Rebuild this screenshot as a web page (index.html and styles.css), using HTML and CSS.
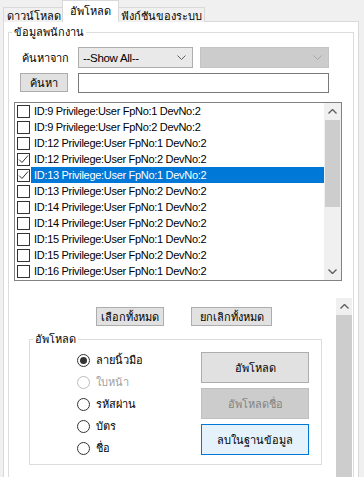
FILE: index.html
```html
<!DOCTYPE html>
<html lang="th">
<head>
  <meta charset="UTF-8">
  <title>อัพโหลด</title>
  <link rel="stylesheet" href="styles.css">
</head>
<body>

  <div class="window">
    <div class="tabs">
      <div class="tab">ดาวน์โหลด</div>
      <div class="tab active">อัพโหลด</div>
      <div class="tab">ฟังก์ชันของระบบ</div>
    </div>

    <div class="page">
      <fieldset class="group emp">
        <legend>ข้อมูลพนักงาน</legend>

        <div class="row find-row">
          <span class="lbl">ค้นหาจาก</span>
          <div class="combo">
            <span>--Show All--</span>
            <svg width="9" height="5" viewBox="0 0 9 5"><path d="M0.5 0.5 L4.5 4.5 L8.5 0.5" fill="none" stroke="#606060"/></svg>
          </div>
          <div class="combo disabled">
            <span></span>
            <svg width="9" height="5" viewBox="0 0 9 5"><path d="M0.5 0.5 L4.5 4.5 L8.5 0.5" fill="none" stroke="#a8a8a8"/></svg>
          </div>
        </div>

        <div class="row search-row">
          <button class="btn small">ค้นหา</button>
          <input class="textbox" type="text">
        </div>

        <div class="list">
          <div class="items">
            <div class="item"><span class="check"></span><span class="txt">ID:9 Privilege:User FpNo:1 DevNo:2</span></div>
            <div class="item"><span class="check"></span><span class="txt">ID:9 Privilege:User FpNo:2 DevNo:2</span></div>
            <div class="item"><span class="check"></span><span class="txt">ID:12 Privilege:User FpNo:1 DevNo:2</span></div>
            <div class="item"><span class="check"><svg width="11" height="11" viewBox="0 0 11 11"><path d="M1 5.5 L4 8.5 L10 1.5" fill="none" stroke="#333"/></svg></span><span class="txt">ID:12 Privilege:User FpNo:2 DevNo:2</span></div>
            <div class="item selected"><span class="check"><svg width="11" height="11" viewBox="0 0 11 11"><path d="M1 5.5 L4 8.5 L10 1.5" fill="none" stroke="#333"/></svg></span><span class="txt">ID:13 Privilege:User FpNo:1 DevNo:2</span></div>
            <div class="item"><span class="check"></span><span class="txt">ID:13 Privilege:User FpNo:2 DevNo:2</span></div>
            <div class="item"><span class="check"></span><span class="txt">ID:14 Privilege:User FpNo:1 DevNo:2</span></div>
            <div class="item"><span class="check"></span><span class="txt">ID:14 Privilege:User FpNo:2 DevNo:2</span></div>
            <div class="item"><span class="check"></span><span class="txt">ID:15 Privilege:User FpNo:1 DevNo:2</span></div>
            <div class="item"><span class="check"></span><span class="txt">ID:15 Privilege:User FpNo:2 DevNo:2</span></div>
            <div class="item"><span class="check"></span><span class="txt">ID:16 Privilege:User FpNo:1 DevNo:2</span></div>
          </div>
          <div class="vscroll list-scroll">
            <div class="arrow"><svg width="9" height="5" viewBox="0 0 9 5"><path d="M0.5 4.5 L4.5 0.5 L8.5 4.5" fill="none" stroke="#606060" stroke-width="1.4"/></svg></div>
            <div class="track"><div class="thumb"></div></div>
            <div class="arrow"><svg width="9" height="5" viewBox="0 0 9 5"><path d="M0.5 0.5 L4.5 4.5 L8.5 0.5" fill="none" stroke="#606060" stroke-width="1.4"/></svg></div>
          </div>
        </div>

        <div class="panel">
          <div class="panel-body">
            <div class="select-row">
              <button class="btn sel">เลือกทั้งหมด</button>
              <button class="btn unsel">ยกเลิกทั้งหมด</button>
            </div>

            <fieldset class="group upload">
              <legend>อัพโหลด</legend>
              <div class="upload-body">
                <div class="radios">
                  <label class="radio"><span class="dot on"></span>ลายนิ้วมือ</label>
                  <label class="radio off"><span class="dot"></span>ใบหน้า</label>
                  <label class="radio"><span class="dot"></span>รหัสผ่าน</label>
                  <label class="radio"><span class="dot"></span>บัตร</label>
                  <label class="radio"><span class="dot"></span>ชื่อ</label>
                </div>
                <div class="actions">
                  <button class="btn big">อัพโหลด</button>
                  <button class="btn big" disabled>อัพโหลดชื่อ</button>
                  <button class="btn big focus">ลบในฐานข้อมูล</button>
                </div>
              </div>
            </fieldset>
          </div>
          <div class="vscroll panel-scroll">
            <div class="arrow"><svg width="9" height="5" viewBox="0 0 9 5"><path d="M0.5 4.5 L4.5 0.5 L8.5 4.5" fill="none" stroke="#606060" stroke-width="1.4"/></svg></div>
            <div class="track"><div class="thumb"></div></div>
          </div>
        </div>
      </fieldset>
    </div>
  </div>

</body>
</html>
```

FILE: styles.css
```css
* {
  box-sizing: border-box;
}

body {
  margin: 0;
  background: #fff;
  font-family: Tahoma, "Noto Sans", "DejaVu Sans", sans-serif;
  font-size: 11px;
  color: #000;
}

.window {
  width: 364px;
  height: 477px;
  overflow: hidden;
  background: #f0f0f0;
}

/* tab strip */
.tabs {
  display: flex;
  align-items: flex-end;
  height: 22px;
  padding-left: 3px;
  position: relative;
  z-index: 1;
}

.tab {
  height: 15px;
  border: 1px solid #d9d9d9;
  border-bottom: none;
  line-height: 15px;
  background: #f0f0f0;
  white-space: nowrap;
  text-align: center;
}

.tab:first-child {
  width: 60px;
  padding-left: 2px;
}

.tab:last-child {
  width: 87px;
}

.tab.active {
  width: 57px;
  height: 22px;
  line-height: 14px;
  padding-top: 3px;
  background: #fff;
  margin: 0 -1px;
  position: relative;
}

.page {
  width: 356px;
  height: 470px;
  margin: -1px 0 0 3px;
  border: 1px solid #d9d9d9;
  background: #fff;
}

/* group boxes */
.group {
  margin: 0;
  padding: 0;
  border: 1px solid #dcdcdc;
  min-width: 0;
}

.group legend {
  margin-left: 3px;
  padding: 0 2px;
  line-height: 16px;
  height: 16px;
}

.emp {
  margin: 2px 4px 0 4px;
  height: 480px;
}

.row {
  display: flex;
  align-items: center;
}

.find-row {
  margin-top: 7px;
  height: 21px;
}

.lbl {
  width: 69px;
  padding-left: 13px;
  white-space: nowrap;
}

.combo {
  display: flex;
  align-items: center;
  justify-content: space-between;
  width: 115px;
  height: 21px;
  padding: 0 6px 0 4px;
  border: 1px solid #adadad;
  background: #e9e9e9;
  font-family: "Liberation Sans", Arial, sans-serif;
  font-size: 11.5px;
  letter-spacing: -0.3px;
}

.combo.disabled {
  width: 129px;
  margin-left: 7px;
  border-color: #c4c4c4;
  background: #cccccc;
}

.search-row {
  margin-top: 5px;
  height: 20px;
}

.btn {
  font-family: inherit;
  font-size: 11px;
  color: #000;
  background: #e1e1e1;
  border: 1px solid #adadad;
  padding: 0;
  line-height: 1;
}

.btn.small {
  width: 48px;
  height: 19px;
  margin-left: 11px;
  align-self: flex-start;
}

.textbox {
  width: 251px;
  height: 20px;
  margin-left: 10px;
  border: 1px solid #7a7a7a;
  background: #fff;
}

/* checked list */
.list {
  display: flex;
  width: 328px;
  height: 179px;
  margin: 9px 0 0 5px;
  border: 1px solid #828282;
  background: #fff;
}

.items {
  flex: 1;
  overflow: hidden;
}

.item {
  display: flex;
  align-items: center;
  height: 16px;
  font-family: "Liberation Sans", Arial, sans-serif;
  font-size: 11px;
  letter-spacing: -0.3px;
  white-space: nowrap;
  padding-left: 2px;
}

.check {
  flex: none;
  width: 13px;
  height: 13px;
  border: 1px solid #333;
  background: #fff;
  margin-right: 1px;
  display: flex;
  align-items: center;
  justify-content: center;
}

.txt {
  flex: 1;
  height: 16px;
  line-height: 16px;
  padding-left: 3px;
}

.selected .txt {
  background: #0078d7;
  color: #fff;
}

.vscroll {
  display: flex;
  flex-direction: column;
  width: 17px;
  background: #f0f0f0;
}

.arrow {
  height: 17px;
  display: flex;
  align-items: center;
  justify-content: center;
}

.track {
  flex: 1;
}

.list-scroll .thumb {
  height: 87px;
  background: #cdcdcd;
  margin: 0 1px;
}

/* scrollable lower panel */
.panel {
  display: flex;
  height: 200px;
  margin: 17px 1px 0 0;
}

.panel-body {
  flex: 1;
}

.select-row {
  display: flex;
  gap: 27px;
  margin: 9px 0 0 87px;
}

.btn.sel {
  width: 68px;
  height: 19px;
}

.btn.unsel {
  width: 81px;
  height: 19px;
}

.upload {
  width: 293px;
  margin: 5px 0 0 20px;
  padding-bottom: 5px;
}

.upload-body {
  display: flex;
}

.radios {
  display: flex;
  flex-direction: column;
  margin: 2px 0 0 47px;
}

.radio {
  display: flex;
  align-items: center;
  height: 22px;
  gap: 6px;
}

.radio.off {
  color: #a0a0a0;
}

.dot {
  width: 13px;
  height: 13px;
  border: 1px solid #333;
  border-radius: 50%;
  background: #fff;
  display: flex;
  align-items: center;
  justify-content: center;
}

.dot.on::after {
  content: "";
  width: 7px;
  height: 7px;
  border-radius: 50%;
  background: #333;
}

.radio.off .dot {
  border-color: #bcbcbc;
}

.actions {
  display: flex;
  flex-direction: column;
  gap: 5px;
  margin: 5px 12px 0 auto;
}

.btn.big {
  width: 108px;
  height: 31px;
}

.btn.big:disabled {
  background: #cccccc;
  border-color: #bfbfbf;
  color: #838383;
}

.btn.focus {
  background: #e5f1fb;
  border-color: #0078d7;
}

.panel-scroll {
  width: 16px;
}

.panel-scroll .thumb {
  height: 100%;
  background: #cdcdcd;
}
```
